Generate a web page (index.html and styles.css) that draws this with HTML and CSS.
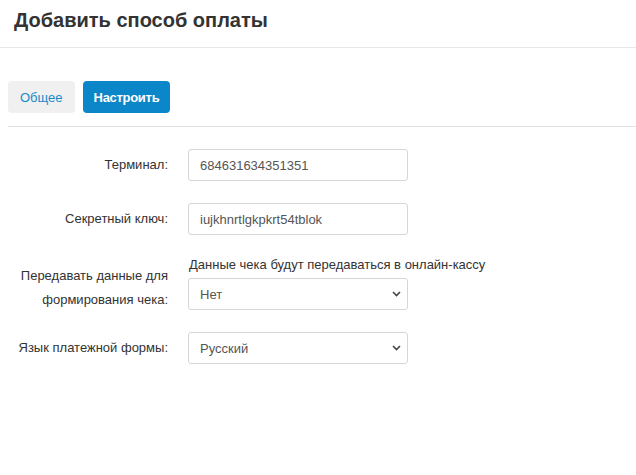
FILE: index.html
```html
<!DOCTYPE html>
<html lang="ru">
<head>
<meta charset="utf-8">
<link rel="stylesheet" href="styles.css">
</head>
<body>
<div class="header"><h1 class="title">Добавить способ оплаты</h1></div>
<div class="content">
  <div class="tabs">
    <button class="tab">Общее</button>
    <button class="tab tab-active">Настроить</button>
  </div>
  <form class="form">
    <div class="row">
      <label class="label">Терминал:</label>
      <div class="field"><input class="control" type="text" value="684631634351351"></div>
    </div>
    <div class="row">
      <label class="label">Секретный ключ:</label>
      <div class="field"><input class="control" type="text" value="iujkhnrtlgkpkrt54tblok"></div>
    </div>
    <div class="row row-help">
      <label class="label label-two">Передавать данные для формирования чека:</label>
      <div class="field">
        <div class="help">Данные чека будут передаваться в онлайн-кассу</div>
        <select class="control select"><option>Нет</option></select>
      </div>
    </div>
    <div class="row">
      <label class="label">Язык платежной формы:</label>
      <div class="field"><select class="control select"><option>Русский</option></select></div>
    </div>
  </form>
</div>
</body>
</html>
```
FILE: styles.css
```css
* { box-sizing: border-box; }
body {
  margin: 0;
  font-family: "Liberation Sans", Arial, sans-serif;
  font-size: 13px;
  color: #333;
  background: #fff;
}
.header {
  height: 48px;
  border-bottom: 1px solid #e8e8e8;
  padding: 7px 14px 0;
}
.title {
  margin: 0;
  font-size: 20px;
  line-height: 27px;
  font-weight: bold;
  color: #333;
}
.content {
  padding: 33px 0 0 8px;
}
.tabs {
  display: flex;
  gap: 8px;
  padding-bottom: 13px;
  border-bottom: 1px solid #e3e3e3;
}
.tab {
  height: 32px;
  padding: 0 12px;
  border: none;
  border-radius: 4px;
  background: #f0f0f0;
  color: #1b8acb;
  font-family: inherit;
  font-size: 13px;
}
.tab-active {
  padding: 0 11px;
  background: #0b86c8;
  color: #fff;
  font-weight: bold;
  letter-spacing: -0.3px;
}
.form {
  padding-top: 22px;
}
.row {
  display: flex;
  align-items: flex-end;
  margin-bottom: 22px;
}
.label {
  width: 160px;
  text-align: right;
  line-height: 32px;
  color: #333;
}
.label-two {
  line-height: 24px;
  margin-bottom: -2px;
}
.field {
  margin-left: 20px;
  width: 220px;
}
.help {
  line-height: 16px;
  margin: 0 0 5px 1px;
  white-space: nowrap;
  color: #333;
}
.control {
  display: block;
  width: 220px;
  height: 32px;
  border: 1px solid #d6d6d6;
  border-radius: 3px;
  padding: 0 11px;
  font-family: inherit;
  font-size: 13px;
  color: #555;
  background: #fff;
}
.select {
  appearance: none;
  -webkit-appearance: none;
  background-image: url("data:image/svg+xml,%3Csvg xmlns='http://www.w3.org/2000/svg' width='9' height='6' viewBox='0 0 9 6'%3E%3Cpath d='M1 1l3.5 3.5L8 1' fill='none' stroke='%23444' stroke-width='1.6'/%3E%3C/svg%3E");
  background-repeat: no-repeat;
  background-position: right 6px center;
}
```
